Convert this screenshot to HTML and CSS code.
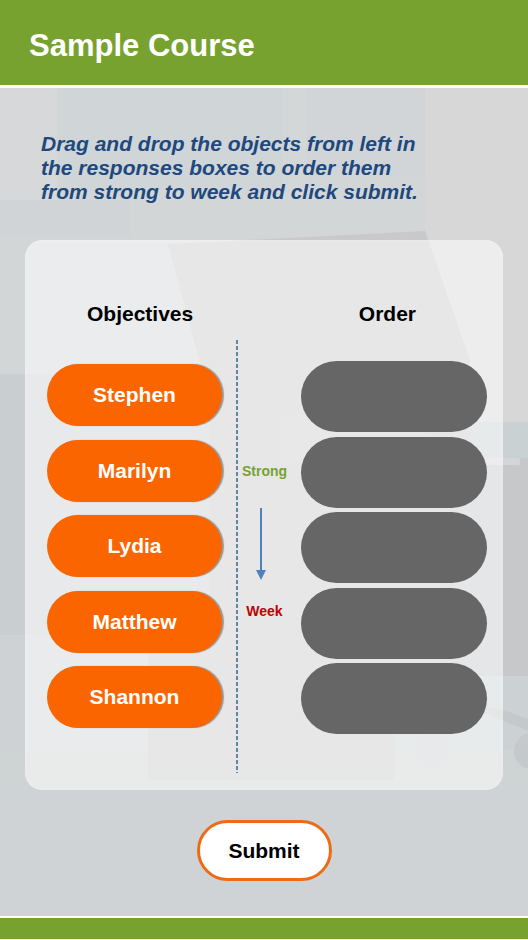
FILE: index.html
```html
<!DOCTYPE html>
<html lang="en">
<head>
<meta charset="utf-8">
<meta name="viewport" content="width=device-width, initial-scale=1">
<title>Sample Course</title>
<link rel="stylesheet" href="styles.css">
</head>
<body>
<header class="site-header"><h1>Sample Course</h1></header>
<main class="activity">
  <svg class="scene" viewBox="0 88 528 828" preserveAspectRatio="none" aria-hidden="true">
    <rect y="88" width="528" height="828" fill="#cfd3d6"/>
    <rect y="88" width="528" height="286" fill="#d3d6d7"/>
    <rect y="88" width="57" height="112" fill="#d6d8d9"/>
    <rect x="57" y="88" width="226" height="100" fill="#d0d5d7"/>
    <rect x="283" y="88" width="23" height="112" fill="#d4d7d8"/>
    <rect x="306" y="88" width="119" height="90" fill="#d1d5d7"/>
    <path d="M425 88H528V422H480L425 226Z" fill="#d7d7d7"/>
    <rect y="200" width="130" height="36" fill="#d0d4d6"/>
    <rect y="374" width="210" height="261" fill="#c9cfd0"/>
    <rect y="635" width="150" height="115" fill="#ced2d5"/>
    <rect y="750" width="528" height="40" fill="#ced3d3"/>
    <rect x="430" y="422" width="98" height="36" fill="#cad1d3"/>
    <rect x="430" y="458" width="98" height="218" fill="#c6c8c9"/>
    <rect x="394" y="676" width="134" height="74" fill="#ccd2d4"/>
    <path d="M168 244 425 231 470 360V676H394V780H148V640H210V400Z" fill="#c9c9cb"/>
    <rect x="280" y="414" width="150" height="50" fill="#cccdce"/>
    <rect x="430" y="458" width="90" height="7" rx="2" fill="#d4d5d6"/>
    <path d="M480 706 504 710 528 719V731L504 721 480 712Z" fill="#c5c9cb"/>
    <circle cx="432" cy="750" r="17" fill="#cbcfd0"/>
    <circle cx="532" cy="751" r="18" fill="#c5c9cb"/>
  </svg>
  <p class="instructions">Drag and drop the objects from left in the responses boxes to order them from strong to week and click submit.</p>
  <section class="panel">
    <div class="headings"><h2>Objectives</h2><h2>Order</h2></div>
    <div class="board">
      <ul class="list items">
        <li><button type="button" class="item" draggable="true">Stephen</button></li>
        <li><button type="button" class="item" draggable="true">Marilyn</button></li>
        <li><button type="button" class="item" draggable="true">Lydia</button></li>
        <li><button type="button" class="item" draggable="true">Matthew</button></li>
        <li><button type="button" class="item" draggable="true">Shannon</button></li>
      </ul>
      <div class="scale">
        <span class="strong">Strong</span>
        <svg class="arrow" width="20" height="76" viewBox="0 0 20 76" aria-hidden="true">
          <path d="M6 5V69" stroke="#4f81bd" stroke-width="2"/>
          <path d="M1 67H11L6 77Z" fill="#4f81bd"/>
        </svg>
        <span class="week">Week</span>
      </div>
      <ol class="list slots">
        <li class="slot"></li>
        <li class="slot"></li>
        <li class="slot"></li>
        <li class="slot"></li>
        <li class="slot"></li>
      </ol>
    </div>
  </section>
  <button type="submit" class="submit">Submit</button>
</main>
<footer class="site-footer"></footer>
</body>
</html>
```
FILE: styles.css
```css
* { box-sizing: border-box; }

body {
  margin: 0;
  min-height: 100vh;
  display: flex;
  flex-direction: column;
  font-family: "Liberation Sans", Arial, sans-serif;
  font-weight: bold;
  font-size: 21px;
  line-height: 24px;
  color: #000;
}

h1, h2, p, ul, ol { margin: 0; padding: 0; }

button { font: inherit; cursor: pointer; }

.site-header {
  padding: 28px 29px 21px;
  background: #78a22f;
  border-bottom: 3px solid #fff;
  color: #fff;
}

.site-header h1 {
  font-size: 31px;
  line-height: 36px;
}

.activity {
  position: relative;
  z-index: 0;
  flex: 1;
  display: flex;
  flex-direction: column;
  padding: 44px 25px 35px;
}

.scene {
  position: absolute;
  inset: 0;
  z-index: -1;
  width: 100%;
  height: 100%;
}

.instructions {
  max-width: 400px;
  margin: 0 0 36px 16px;
  font-style: italic;
  color: #1f497d;
}

.panel {
  padding: 62px 16px 17px 22px;
  border-radius: 17px;
  background: rgba(255, 255, 255, 0.55);
  box-shadow: inset 0 0 0 2px rgba(255, 255, 255, 0.1);
}

.headings {
  display: flex;
  justify-content: space-between;
  padding: 0 71px 0 40px;
}

.headings h2 { font-size: 21px; }

.board {
  display: grid;
  grid-template-columns: 189fr 65px 186fr;
  margin-top: 14px;
  min-height: 433px;
}

.list {
  display: flex;
  flex-direction: column;
  justify-content: space-between;
  list-style: none;
}

.items {
  height: 364px;
  margin: 24px 14px 0 0;
}

.slots {
  height: 373px;
  margin-top: 21px;
}

.item {
  display: block;
  width: 100%;
  height: 62px;
  padding: 0;
  border: 0;
  border-radius: 31px;
  background: #fb6500;
  box-shadow: 2px 0 1px rgba(0, 0, 0, 0.35);
  color: #fff;
}

.slot {
  height: 71px;
  border-radius: 36px;
  background: #666;
}

.scale {
  display: flex;
  flex-direction: column;
  align-items: center;
  gap: 24px;
  padding: 123px 10px 0 2px;
  background: repeating-linear-gradient(#5f87a6 0 4px, transparent 4px 6px) left top / 2px 100% no-repeat;
  font-size: 14px;
  line-height: 16px;
}

.arrow { overflow: visible; }

.strong { color: #78a22f; }

.week { color: #c00000; }

.submit {
  align-self: center;
  width: 135px;
  height: 61px;
  margin-top: 30px;
  padding: 0;
  border: 3px solid #ed6b14;
  border-radius: 31px;
  background: #fff;
  color: #000;
}

.site-footer {
  height: 24px;
  background: #78a22f;
  border-top: 2px solid #fff;
  border-bottom: 1px solid #f4fae0;
}
```
